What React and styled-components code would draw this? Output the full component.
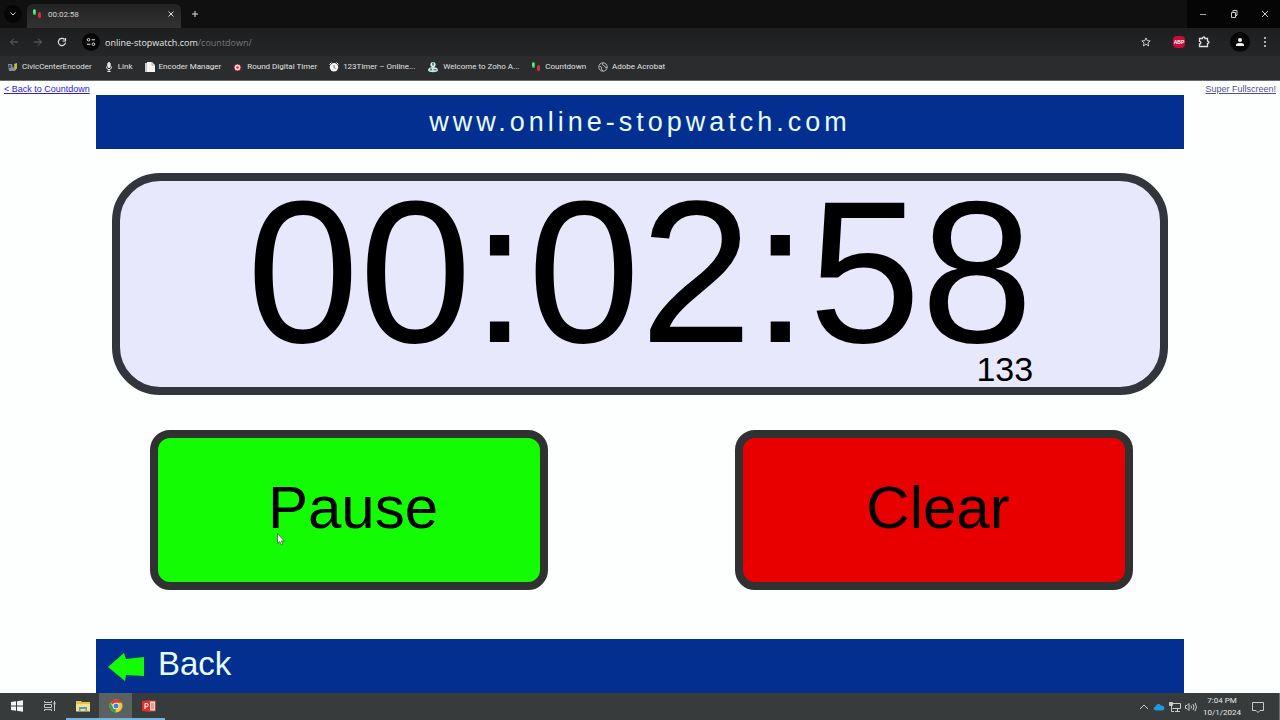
import styled, { createGlobalStyle, css } from "styled-components";

const GlobalStyle = createGlobalStyle`
  * {
    box-sizing: border-box;
  }
  body {
    margin: 0;
    background: #fdfffe;
    font-family: "Liberation Sans", Arial, sans-serif;
  }
  button {
    margin: 0;
    padding: 0;
    border: 0;
    background: none;
    color: inherit;
    font: inherit;
    cursor: pointer;
  }
  svg {
    display: block;
    flex: none;
  }
`;

const LightsIcon = () => (
  <svg width="10" height="10" viewBox="0 0 10 10">
    <rect x="1" y="0" width="3" height="6" rx="1.5" fill="#22d04a" />
    <rect x="1.6" y="1" width="1" height="3" fill="#c9f7d0" />
    <rect x="6" y="3" width="3" height="6" rx="1.5" fill="#d92b43" />
  </svg>
);

const EncoderIcon = () => (
  <svg width="10" height="10" viewBox="0 0 10 10">
    <path d="M0 2h4l1 4 4-5v5L7 9H1z" fill="#8a8f96" />
    <path d="M6 2l3-1v5l-2 2z" fill="#b9bd3c" />
    <path d="M1 3h2v3H1z" fill="#3c4c73" />
  </svg>
);

const MicIcon = () => (
  <svg width="10" height="10" viewBox="0 0 10 10" fill="none" stroke="#e8e8e8">
    <rect x="3.8" y="0.6" width="2.4" height="5" rx="1.2" fill="#e8e8e8" />
    <path d="M2.4 4.6c0 4 5.2 4 5.2 0M5 7.5v2M3.4 9.5h3.2" />
  </svg>
);

const PagesIcon = () => (
  <svg width="10" height="10" viewBox="0 0 10 10">
    <path d="M0 1h7v9H0z" fill="#c9c9c9" />
    <path d="M2 0h5l3 3v7H2z" fill="#f4f4f4" />
    <path d="M7 0v3h3" fill="none" stroke="#9a9a9a" strokeWidth=".7" />
  </svg>
);

const RoundTimerIcon = () => (
  <svg width="10" height="10" viewBox="0 0 10 10">
    <circle cx="4.5" cy="5.5" r="3.5" fill="#f2dede" stroke="#8f2027" />
    <circle cx="4.5" cy="5.5" r="1.3" fill="#d22d35" />
  </svg>
);

const AlarmIcon = () => (
  <svg width="10" height="10" viewBox="0 0 10 10">
    <path d="M.5 2.5l2-2M9.5 2.5l-2-2" stroke="#eee" />
    <circle cx="5" cy="5.3" r="4.2" fill="#f5f5f5" />
    <path d="M5 3v2.5l1.6 1" fill="none" stroke="#555" strokeWidth=".8" />
  </svg>
);

const AssistIcon = () => (
  <svg width="12" height="12" viewBox="0 0 12 12">
    <circle cx="6" cy="3.5" r="2.6" fill="#dff2ee" />
    <path d="M1 9c0-4 10-4 10 0 0 3-10 3-10 0z" fill="#cfe9e4" />
    <path d="M5 1.5h2v3H5zM3 7.5h2v2H3zM6.5 8h3v1.5h-3z" fill="#4b8f82" />
  </svg>
);

const GlobeIcon = () => (
  <svg width="10" height="10" viewBox="0 0 10 10">
    <circle cx="5" cy="5" r="4.2" fill="none" stroke="#b8b8b8" />
    <path d="M1.4 4l2.2 1.2L3.4 7l1.4 2M5 1l-.6 1.8L6.6 4l1 2L9 5" fill="none" stroke="#b8b8b8" />
  </svg>
);

const bookmarks = [
  { name: "CivicCenterEncoder", icon: EncoderIcon },
  { name: "Link", icon: MicIcon },
  { name: "Encoder Manager", icon: PagesIcon },
  { name: "Round Digital Timer", icon: RoundTimerIcon },
  { name: "123Timer – Online...", icon: AlarmIcon },
  { name: "Welcome to Zoho A...", icon: AssistIcon },
  { name: "Countdown", icon: LightsIcon },
  { name: "Adobe Acrobat", icon: GlobeIcon },
];

const WindowsIcon = () => (
  <svg width="12" height="12" viewBox="0 0 12 12" fill="#f5f5f5">
    <path d="M0 2l5-.7v4.300H0zM6 1.200L12 .3v5.300H6zM0 6.400h5v4.300L0 10zM6 6.400h6v5.300l-6-.9z" />
  </svg>
);

const TaskViewIcon = () => (
  <svg width="12" height="12" viewBox="0 0 12 12" fill="none" stroke="#c4c6c7">
    <path d="M.5 1v1.500h7V1M.5 11V9.500h7V11M.5 4.500h7v3h-7zM10.500 1v10" />
    <path d="M9.500 3.500h2" strokeWidth="2" />
  </svg>
);

const FolderIcon = () => (
  <svg width="14" height="12" viewBox="0 0 14 12">
    <path d="M0 1h5l1 1h8v9H0z" fill="#e5c14e" />
    <path d="M0 4h14v7.500H0z" fill="#f7e08a" />
    <path d="M3 7h8v4.500H9.500V9h-5v2.500H3z" fill="#5a9cc4" />
  </svg>
);

const ChromeIcon = () => (
  <svg width="14" height="14" viewBox="0 0 14 14">
    <circle cx="7" cy="7" r="6.500" fill="#f5c82e" />
    <path d="M7 7L1.370 3.750A6.500 6.500 0 0 1 12.630 3.750H7z" fill="#dd3b30" />
    <path d="M1.370 3.750L4.200 8.600 7 10.250 6.500 13.480A6.500 6.500 0 0 1 1.370 3.750z" fill="#35a04f" />
    <circle cx="7" cy="7" r="3.200" fill="#fff" />
    <circle cx="7" cy="7" r="2.500" fill="#3d7de0" />
  </svg>
);

const SlidesIcon = () => (
  <svg width="14" height="12" viewBox="0 0 14 12">
    <path d="M7 1h6.500v10H7z" fill="#f3d9d4" stroke="#cf3b32" />
    <path d="M9 4h3M9 6h3M9 8h3" stroke="#cf3b32" strokeWidth=".8" />
    <path d="M0 1l8-1v12l-8-1z" fill="#d8322c" />
    <path d="M3 9V3.500h1.600a1.600 1.600 0 0 1 0 3.200H3" fill="none" stroke="#fff" />
  </svg>
);

const apps = [
  { name: "Start", icon: WindowsIcon },
  { name: "Task View", icon: TaskViewIcon },
  { name: "File Explorer", icon: FolderIcon, open: true },
  { name: "Google Chrome", icon: ChromeIcon, open: true, active: true },
  { name: "PowerPoint", icon: SlidesIcon, open: true },
];

function Browser() {
  return (
    <header>
      <TabStrip>
        <RoundButton aria-label="Search tabs">
          <svg width="8" height="8" viewBox="0 0 8 8" fill="none" stroke="#ddd">
            <path d="M1.500 2.500L4 5l2.500-2.500" />
          </svg>
        </RoundButton>
        <Tab>
          <LightsIcon />
          <TabTitle>00:02:58</TabTitle>
          <button aria-label="Close tab">
            <svg width="8" height="8" viewBox="0 0 8 8" stroke="#ddd">
              <path d="M1.500 1.500l5 5M6.500 1.500l-5 5" />
            </svg>
          </button>
        </Tab>
        <NewTab aria-label="New tab">
          <svg width="8" height="8" viewBox="0 0 8 8" stroke="#ddd">
            <path d="M4 1v6M1 4h6" />
          </svg>
        </NewTab>
        <WindowButtons>
          <button aria-label="Minimize">
            <svg width="8" height="8" viewBox="0 0 8 8" stroke="#aaa">
              <path d="M1 4.500h6" />
            </svg>
          </button>
          <button aria-label="Restore">
            <svg width="8" height="8" viewBox="0 0 8 8" fill="none" stroke="#ccc">
              <path d="M1.500 2.500h4v5h-4zM3 2V.500h4v5H6" />
            </svg>
          </button>
          <button aria-label="Close">
            <svg width="8" height="8" viewBox="0 0 8 8" stroke="#ccc">
              <path d="M1 1l6 6M7 1L1 7" />
            </svg>
          </button>
        </WindowButtons>
      </TabStrip>

      <Toolbar>
        <ToolButton aria-label="Back">
          <svg width="10" height="10" viewBox="0 0 10 10" fill="none" stroke="#66686a">
            <path d="M9 5H1.500M5 1.500L1.500 5 5 8.500" />
          </svg>
        </ToolButton>
        <ToolButton aria-label="Forward">
          <svg width="10" height="10" viewBox="0 0 10 10" fill="none" stroke="#66686a">
            <path d="M1 5h7.500M5 1.500L8.500 5 5 8.500" />
          </svg>
        </ToolButton>
        <ToolButton aria-label="Reload">
          <svg width="10" height="10" viewBox="0 0 10 10" fill="none" stroke="#e4e4e4" strokeWidth="1.200">
            <path d="M8.500 5.500A3.600 3.600 0 1 1 7.500 2.500M5.500 4H8.500V1" />
          </svg>
        </ToolButton>
        <Address>
          <RoundButton aria-label="Site information">
            <svg width="10" height="10" viewBox="0 0 10 10" fill="none" stroke="#ddd">
              <circle cx="2.500" cy="2.800" r="1.300" />
              <path d="M5.500 2.800H9M1 7.200h3.500" />
              <circle cx="7.500" cy="7.200" r="1.300" />
            </svg>
          </RoundButton>
          <Url>
            online-stopwatch.com<span>/countdown/</span>
          </Url>
          <button aria-label="Bookmark this page">
            <svg width="10" height="10" viewBox="0 0 10 10" fill="none" stroke="#ddd" strokeWidth=".9">
              <path d="M5 .900l1.200 2.800 3 .200-2.300 2 .700 3L5 7.300 2.400 8.900l.700-3-2.300-2 3-.200z" />
            </svg>
          </button>
        </Address>
        <Extensions>
          <AdBlock aria-label="Adblock Plus">ABP</AdBlock>
          <button aria-label="Extensions">
            <svg width="12" height="12" viewBox="0 0 12 12" fill="none" stroke="#e0e0e0" strokeWidth="1.300">
              <path d="M1.500 2.500h3c0-2 2.500-2 2.500 0h2.500v2.700c2 0 2 2.300 0 2.300v3h-8V8c1.800 0 1.800-2.600 0-2.600z" />
            </svg>
          </button>
          <Avatar aria-label="Profile">
            <svg width="10" height="10" viewBox="0 0 10 10" fill="#f0f0f0">
              <circle cx="5" cy="3" r="2" />
              <path d="M1 9V7.500C1 5.500 9 5.500 9 7.500V9z" />
            </svg>
          </Avatar>
          <button aria-label="Menu">
            <svg width="4" height="12" viewBox="0 0 4 12" fill="#ddd">
              <circle cx="2" cy="2" r="1" />
              <circle cx="2" cy="6" r="1" />
              <circle cx="2" cy="10" r="1" />
            </svg>
          </button>
        </Extensions>
      </Toolbar>

      <BookmarkBar>
        {bookmarks.map(({ name, icon: Icon }) => (
          <Bookmark href="#" key={name}>
            <Icon />
            {name}
          </Bookmark>
        ))}
      </BookmarkBar>
    </header>
  );
}

function Stopwatch() {
  return (
    <Stage>
      <Banner>www.online-stopwatch.com</Banner>
      <Display>
        <Readout role="timer">
          <Time>00:02:58</Time>
          <Millis>133</Millis>
        </Readout>
      </Display>
      <Controls>
        <BigButton $color="#14fc04">
          Pause
          <Pointer width="8" height="13" viewBox="0 0 8 13">
            <path
              d="M.500 .500v10l2.300-2 1.500 3.500 1.500-.700-1.500-3.300h3z"
              fill="#fff"
              stroke="#555"
              strokeWidth=".800"
            />
          </Pointer>
        </BigButton>
        <BigButton $color="#e80000">Clear</BigButton>
      </Controls>
      <Footer>
        <BackLink href="#">
          <svg width="38" height="30" viewBox="0 0 38 30">
            <path d="M1 15L17 1l2 6 18-2v19l-18-1-1 6z" fill="#14fc04" />
          </svg>
          Back
        </BackLink>
      </Footer>
    </Stage>
  );
}

function Taskbar() {
  return (
    <Bar>
      {apps.map(({ name, icon: Icon, open, active }) => (
        <AppButton key={name} aria-label={name} $open={open} $active={active}>
          <Icon />
        </AppButton>
      ))}
      <Tray>
        <svg width="10" height="10" viewBox="0 0 10 10" fill="none" stroke="#c8cacb">
          <path d="M1 7l4-4 4 4" />
        </svg>
        <svg width="12" height="10" viewBox="0 0 12 10">
          <path d="M3 8.500C0 8.500 0 5 2.500 4.800 3 1.500 7 1.200 8 3.600c4-.400 4.500 4.900 1 4.900z" fill="#1c9be0" />
        </svg>
        <svg width="12" height="10" viewBox="0 0 12 10" fill="none" stroke="#c8cacb">
          <path d="M4 1.500h7.500v5H3.500M6 9.500h5M8.500 7v2M2.500 4v5.500H5" />
          <path d="M.500 .500h3v3h-3z" fill="#c8cacb" />
        </svg>
        <svg width="12" height="10" viewBox="0 0 12 10" fill="none" stroke="#c8cacb">
          <path d="M.500 3.500H2l2-2v7l-2-2H.500zM6 3.500q1 1.500 0 3M8 2q2 3 0 6M10 .800q3 4.200 0 8.400" />
        </svg>
        <Clock>
          <span>7:04 PM</span>
          <span>10/1/2024</span>
        </Clock>
        <button aria-label="Notifications">
          <svg width="12" height="12" viewBox="0 0 12 12" fill="none" stroke="#c8cacb">
            <path d="M.500 1.500h11v8H8L6 11.500 4 9.500H.500z" />
          </svg>
        </button>
      </Tray>
    </Bar>
  );
}

function App() {
  return (
    <Screen>
      <GlobalStyle />
      <Browser />
      <Page>
        <SideLink href="#">&lt; Back to Countdown</SideLink>
        <Stopwatch />
        <SideLink href="#" $right>
          Super Fullscreen!
        </SideLink>
      </Page>
      <Taskbar />
    </Screen>
  );
}

const Screen = styled.div`
  display: flex;
  flex-direction: column;
  min-height: 100vh;
`;

const center = css`
  display: flex;
  align-items: center;
  justify-content: center;
`;

const TabStrip = styled.div`
  display: flex;
  align-items: center;
  height: 28px;
  padding-left: 4px;
  background: #111011;
  font-family: Roboto, sans-serif;
  font-size: 8px;
  color: #d8d4d4;
`;

const RoundButton = styled.button`
  ${center}
  width: 18px;
  height: 18px;
  border-radius: 9px;
  background: #060606;
`;

const Tab = styled.div`
  display: flex;
  align-items: center;
  gap: 6px;
  align-self: flex-end;
  width: 154px;
  height: 24px;
  margin-left: 5px;
  padding: 0 6px 4px 5px;
  border-radius: 6px 6px 0 0;
  background: linear-gradient(#242324, #333233);
`;

const TabTitle = styled.span`
  flex: 1;
`;

const NewTab = styled.button`
  margin-left: 10px;
`;

const WindowButtons = styled.div`
  display: flex;
  align-self: stretch;
  margin-left: auto;
  background: #050505;

  button {
    ${center}
    width: 31px;
  }
`;

const Toolbar = styled.div`
  display: flex;
  align-items: center;
  height: 28px;
  padding: 0 13px 0 2px;
  background: linear-gradient(#1c1e1f, #242627);
`;

const ToolButton = styled.button`
  ${center}
  width: 24px;
  height: 24px;
`;

const Address = styled.div`
  display: flex;
  align-items: center;
  flex: 1;
  margin-left: 8px;
`;

const Url = styled.div`
  flex: 1;
  margin-left: 5px;
  font-family: "Open Sans", sans-serif;
  font-size: 9px;
  color: #e6e6e6;

  span {
    color: #77797b;
  }
`;

const Extensions = styled.div`
  display: flex;
  align-items: center;
  gap: 13px;
  margin-left: 22px;
`;

const AdBlock = styled.button`
  ${center}
  width: 12px;
  height: 12px;
  border-radius: 4px;
  background: #c70d3a;
  color: #fff;
  font-size: 5px;
  font-weight: bold;
`;

const Avatar = styled.button`
  ${center}
  width: 20px;
  height: 20px;
  margin-left: 7px;
  border-radius: 10px;
  background: #060606;
`;

const BookmarkBar = styled.nav`
  display: flex;
  align-items: center;
  gap: 12px;
  height: 25px;
  padding: 0 8px 2px;
  border-bottom: 1px solid #6b6b6b;
  background: #2a2c2d;
`;

const Bookmark = styled.a`
  display: flex;
  align-items: center;
  gap: 4px;
  font-family: Roboto, sans-serif;
  font-size: 8px;
  line-height: 12px;
  color: #e2e2e2;
  text-decoration: none;
  white-space: nowrap;
`;

const Page = styled.main`
  display: flex;
  flex: 1;
`;

const SideLink = styled.a`
  flex: 1;
  padding: 2px 4px;
  font-size: 9px;
  line-height: 12px;
  color: ${(props) => (props.$right ? "#55508c" : "#2e22d8")};
  text-align: ${(props) => (props.$right ? "right" : "left")};
  white-space: nowrap;
`;

const Stage = styled.section`
  display: flex;
  flex-direction: column;
  width: 85%;
  padding-top: 14px;
`;

const Banner = styled.h1`
  margin: 0;
  background: #032f90;
  color: #e6fbff;
  font-size: 27px;
  font-weight: normal;
  line-height: 54px;
  letter-spacing: 4px;
  text-align: center;
`;

const Display = styled.div`
  display: flex;
  justify-content: center;
  margin: 24px 16px 0;
  padding: 6px 0;
  border: 8px solid #33353c;
  border-radius: 48px;
  background: #e8e8fc;
`;

const Readout = styled.div`
  display: flex;
  flex-direction: column;
  color: #000;
`;

const Time = styled.span`
  font-size: 202px;
  line-height: 170px;
`;

const Millis = styled.span`
  font-size: 34px;
  line-height: 24px;
  text-align: right;
`;

const Controls = styled.div`
  display: flex;
  justify-content: space-between;
  margin: 35px 0 49px;
  padding: 0 51px 0 54px;
`;

const BigButton = styled.button`
  && {
    position: relative;
    flex: 0 1 398px;
    padding: 34px 0 38px 8px;
    border: 8px solid #303232;
    border-radius: 20px;
    background: ${(props) => props.$color};
    color: #000;
    font-size: 60px;
    line-height: 72px;
  }
`;

const Pointer = styled.svg`
  position: absolute;
  top: 95px;
  left: 119px;
`;

const Footer = styled.footer`
  display: flex;
  height: 54px;
  margin-top: auto;
  padding: 0 11px;
  background: #032f90;
`;

const BackLink = styled.a`
  display: flex;
  align-items: center;
  align-self: flex-start;
  gap: 13px;
  color: #e6fbff;
  font-size: 33px;
  line-height: 50px;
  text-decoration: none;

  svg {
    margin-top: 6px;
  }
`;

const Bar = styled.div`
  display: flex;
  height: 27px;
  background: #373b3c;
`;

const AppButton = styled.button`
  && {
    ${center}
    width: 33px;
    border-bottom: 2px solid ${(props) => (props.$open ? "#76b4dc" : "transparent")};
    background: ${(props) => (props.$active ? "#5b6061" : "none")};
  }
`;

const Tray = styled.div`
  display: flex;
  align-items: center;
  gap: 4px;
  margin-left: auto;
  padding-right: 15px;
  border-right: 1px solid #6b6e6f;
`;

const Clock = styled.div`
  display: flex;
  flex-direction: column;
  margin: 0 7px 0 2px;
  font-family: Roboto, sans-serif;
  font-size: 8px;
  line-height: 12px;
  color: #e8e8e8;
  text-align: center;
`;

export default App;
